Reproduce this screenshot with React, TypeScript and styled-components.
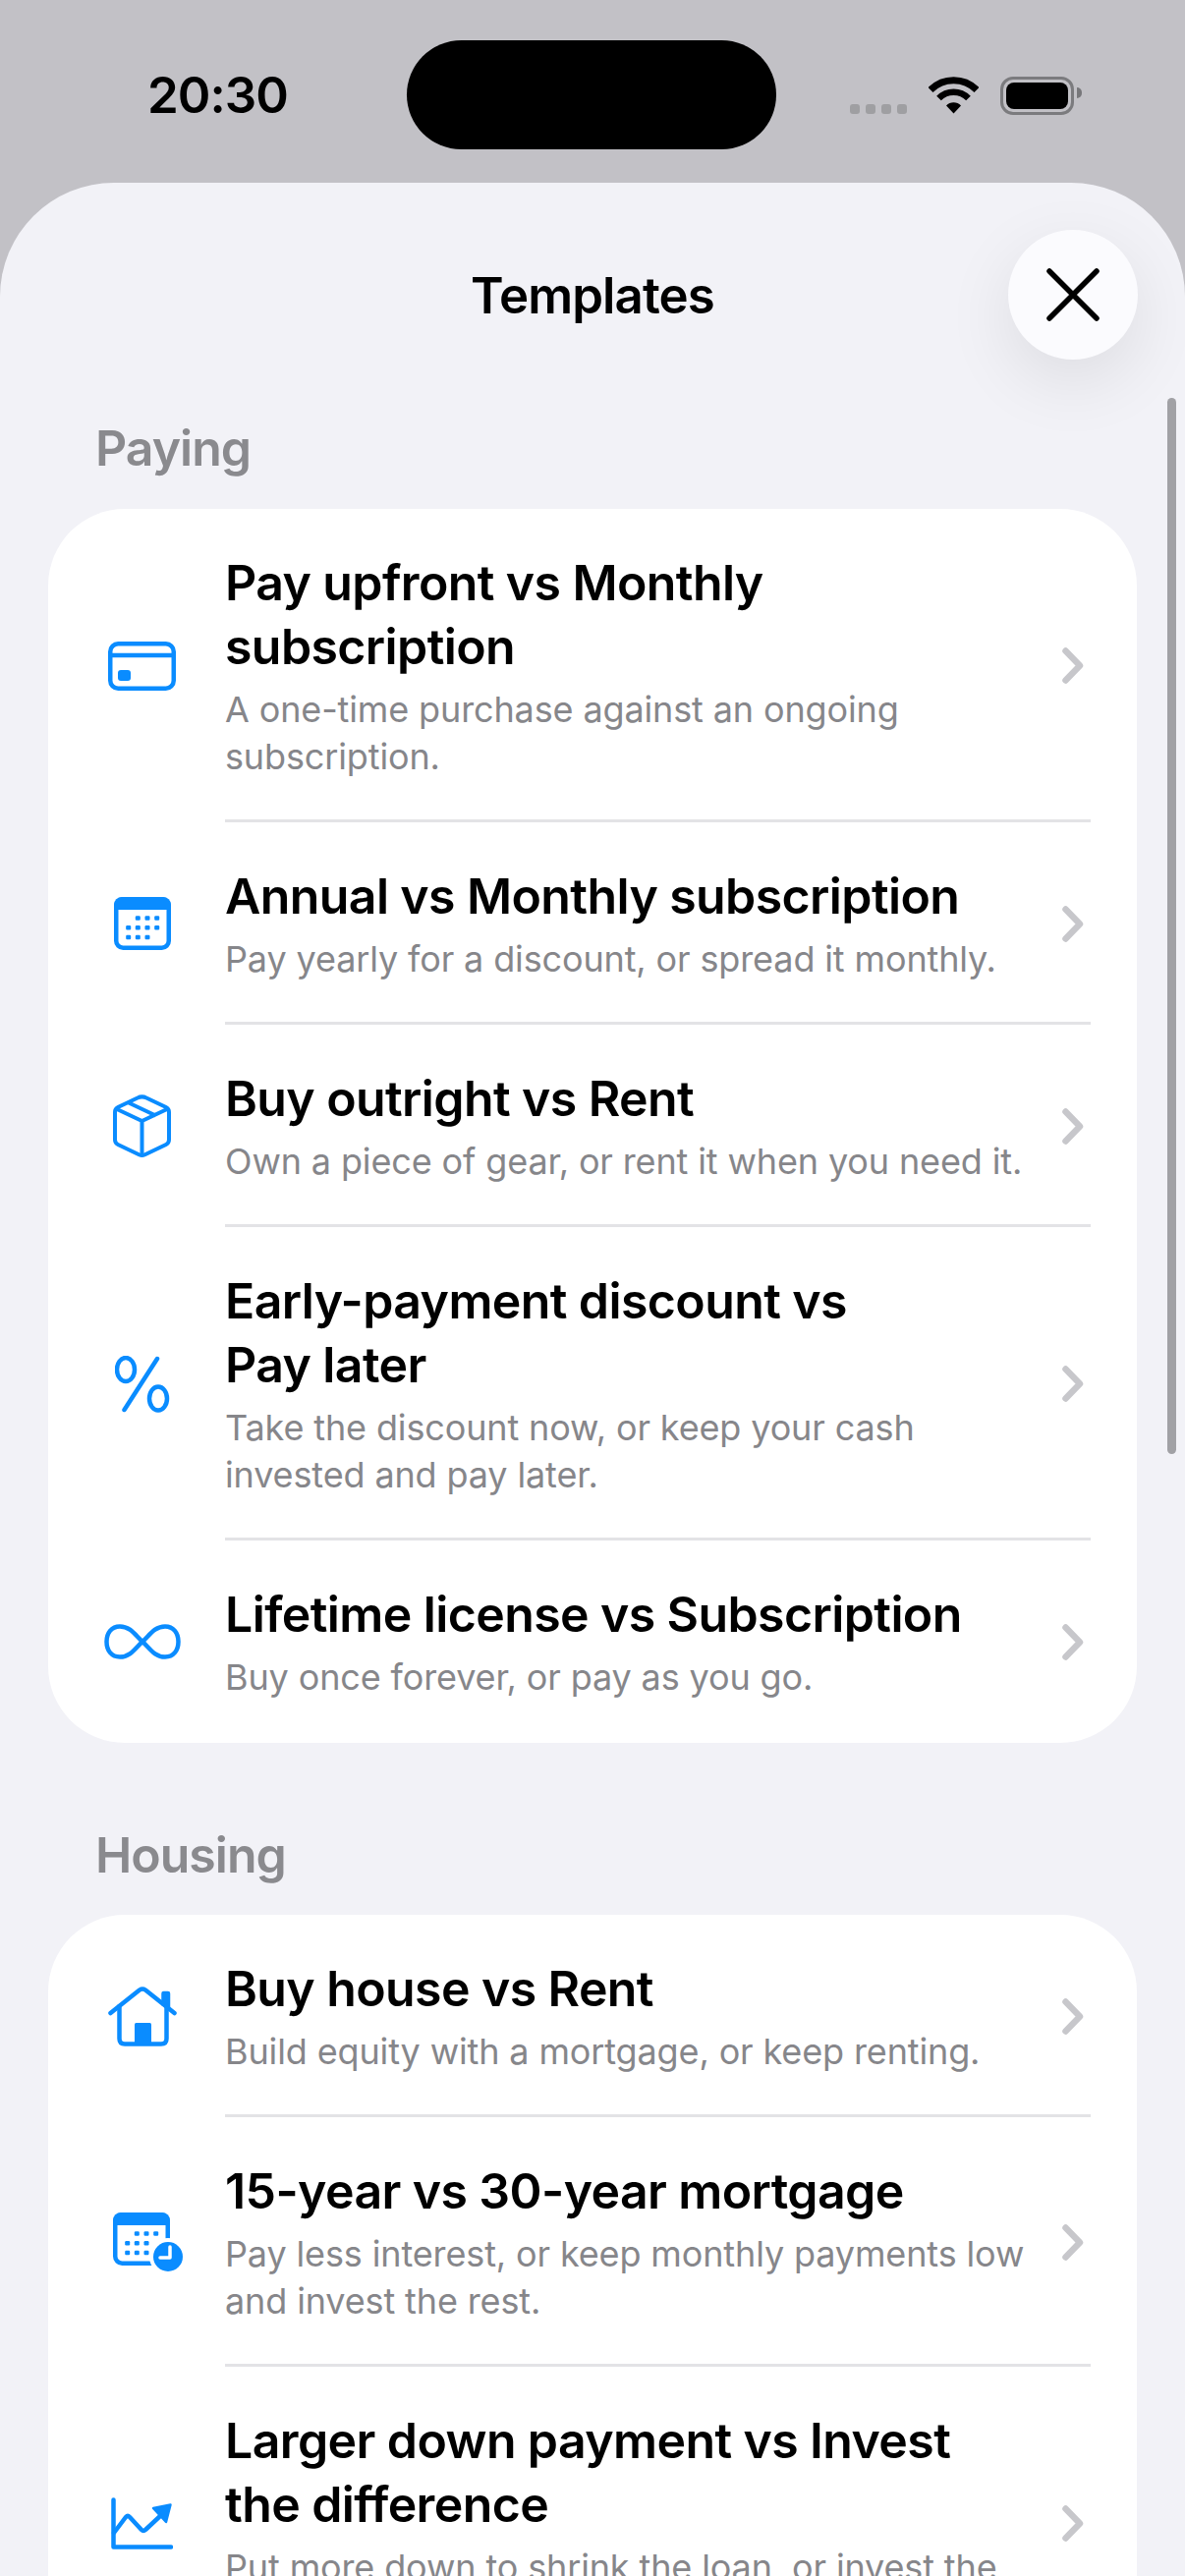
import React from "react";
import styled, {createGlobalStyle} from "styled-components";

type Template = {
    icon: React.ReactNode,
    title: string,
    text: string
}

type Section = {
    name: string,
    rows: Template[]
}

const BLUE = '#0a8cff'

const GlobalStyle = createGlobalStyle`
  html, body {
    margin: 0;
    height: 2622px;
    overflow: hidden;
    background: #c2c1c6;
  }
  body {
    font-family: Inter, "Liberation Sans", sans-serif;
    -webkit-font-smoothing: antialiased;
  }
`

const Screen = styled.div`
  width: 1206px;
  height: 2622px;
  overflow: hidden;
  background: #c2c1c6;
`

const StatusBar = styled.div`
  display: grid;
  grid-template-columns: 414px 376px 1fr;
  height: 186px;
`

const Time = styled.div`
  padding: 65px 0 0 150px;
  font-size: 51px;
  line-height: 64px;
  font-weight: 600;
  letter-spacing: -1px;
  color: #000;
`

const Island = styled.div`
  height: 111px;
  margin-top: 41px;
  border-radius: 56px;
  background: #000;
`

const StatusIcons = styled.div`
  display: flex;
  align-items: flex-start;
  padding: 78px 0 0 75px;
`

const Dots = styled.div`
  display: flex;
  gap: 6px;
  margin: 28px 22px 0 0;
`

const Dot = styled.span`
  width: 10px;
  height: 10px;
  border-radius: 3px;
  background: #9f9fa2;
`

const Wifi = styled.svg`
  width: 51px;
  height: 38px;
  margin-right: 22px;
`

const Battery = styled.div`
  position: relative;
  box-sizing: border-box;
  width: 75px;
  height: 39px;
  padding: 3px;
  border: 3px solid #7b7b7e;
  border-radius: 13px;
  &::before {
    content: '';
    display: block;
    height: 100%;
    border-radius: 8px;
    background: #000;
  }
  &::after {
    content: '';
    position: absolute;
    top: 8px;
    right: -11px;
    width: 5px;
    height: 11px;
    border-radius: 0 6px 6px 0;
    background: #77777a;
  }
`

const Sheet = styled.div`
  position: relative;
  height: 2436px;
  overflow: hidden;
  border-radius: 116px 116px 0 0;
  background: #f2f2f7;
`

const Header = styled.div`
  display: grid;
  grid-template-columns: 1fr auto 1fr;
  align-items: center;
  padding: 48px 48px 0;
`

const Title = styled.div`
  font-size: 51px;
  font-weight: 600;
  letter-spacing: -0.9px;
  color: #000;
`

const CloseButton = styled.div`
  justify-self: end;
  display: flex;
  align-items: center;
  justify-content: center;
  width: 132px;
  height: 132px;
  border-radius: 50%;
  background: #fbfbfe;
  box-shadow: 0 22px 70px rgba(0, 0, 0, 0.09);
`

const ScrollThumb = styled.div`
  position: absolute;
  top: 219px;
  right: 9px;
  width: 9px;
  height: 1075px;
  border-radius: 5px;
  background: #a1a1a5;
`

const SectionBlock = styled.div`
  padding: 0 49px;
`

const SectionName = styled.div<{$first: boolean}>`
  padding: ${props => props.$first ? '60px 0 32px' : '84px 0 31px'} 48px;
  font-size: 50px;
  line-height: 60px;
  font-weight: 600;
  letter-spacing: -1px;
  color: #8a8a8e;
`

const Card = styled.div`
  border-radius: 78px;
  background: #fff;
  overflow: hidden;
`

const Row = styled.div`
  display: flex;
  align-items: stretch;
`

const IconSlot = styled.div`
  flex: none;
  display: flex;
  align-items: center;
  justify-content: center;
  width: 169px;
  margin-left: 11px;
`

const RowBody = styled.div<{$last: boolean}>`
  flex: 1;
  display: flex;
  align-items: center;
  justify-content: space-between;
  margin-right: 47px;
  padding: 43px 0 40px;
  border-bottom: 3px solid ${props => props.$last ? 'transparent' : '#e3e3e6'};
`

const RowText = styled.div`
  width: 816px;
`

const RowTitle = styled.div`
  margin-bottom: 7px;
  font-size: 50px;
  line-height: 65px;
  font-weight: 600;
  letter-spacing: -0.6px;
  color: #000;
`

const RowSub = styled.div`
  font-size: 36px;
  line-height: 48px;
  letter-spacing: -0.13px;
  color: #86868a;
`

const Chevron = styled.svg`
  flex: none;
  width: 22px;
  height: 37px;
  margin-right: 7px;
`

const ClockCalendarSvg = styled.svg`
  margin-left: 12px;
`

function CardIcon(){
    return(
        <svg width="69" height="50" viewBox="0 0 69 50" fill="none" stroke={BLUE} strokeWidth="4.5">
            <rect x="2.25" y="2.25" width="64.5" height="45.5" rx="8"/>
            <path d="M2 14h65"/>
            <rect x="10" y="29" width="13" height="11" rx="3" fill={BLUE} stroke="none"/>
        </svg>
    )
}

function CalendarDots({rows}: {rows: number[][]}){
    const xs = [14.7, 24.3, 34, 43.7]
    const ys = [21.5, 31.3, 41]
    return(
        <>
            {rows.map((cols, r) => cols.map(c => (
                <rect key={r + '-' + c} x={xs[c] - 2.5} y={ys[r] - 2.2} width="5" height="4.4" rx="1.2" fill={BLUE}/>
            )))}
        </>
    )
}

function CalendarIcon(){
    return(
        <svg width="58" height="54" viewBox="0 0 58 54" fill="none">
            <rect x="2.25" y="2.25" width="53.5" height="49.5" rx="7" stroke={BLUE} strokeWidth="4.5"/>
            <path d="M0 13V8a8 8 0 0 1 8-8h42a8 8 0 0 1 8 8v5z" fill={BLUE}/>
            <CalendarDots rows={[[1, 2, 3], [0, 1, 2, 3], [0, 1, 2]]}/>
        </svg>
    )
}

function BoxIcon(){
    return(
        <svg width="59" height="64" viewBox="0 0 59 64" fill="none" stroke={BLUE} strokeWidth="4" strokeLinejoin="round">
            <path d="M25 3.5a10 10 0 0 1 9 0L54 13q3 1.5 3 5V46q0 3.5-3 5L32 61.5q-2.5 1-5 0L5 51q-3-1.5-3-5V18q0-3.5 3-5z"/>
            <path d="M3 14.5 29.5 27 56 14.5M29.5 27V62M16 8.5 43.5 21.5"/>
        </svg>
    )
}

function PercentIcon(){
    return(
        <svg width="56" height="58" viewBox="0 0 56 58" fill="none" stroke={BLUE} strokeWidth="4.5">
            <ellipse cx="11" cy="14" rx="9" ry="12"/>
            <ellipse cx="44" cy="43.5" rx="9" ry="12"/>
            <path d="M43 3 9.5 55" strokeLinecap="round"/>
        </svg>
    )
}

function InfinityIcon(){
    return(
        <svg width="78" height="36" viewBox="0 0 78 36" fill="none" stroke={BLUE} strokeWidth="4.5">
            <path d="M39 18C32 12 27 2.5 16 2.5 7.5 2.5 2.5 9 2.5 18S7.5 33.5 16 33.5C27 33.5 32 24 39 18S51 2.5 62 2.5C70.5 2.5 75.5 9 75.5 18S70.5 33.5 62 33.5C51 33.5 46 24 39 18Z"/>
        </svg>
    )
}

function HouseIcon(){
    return(
        <svg width="70" height="62" viewBox="0 0 70 62" fill="none" stroke={BLUE} strokeWidth="4.5" strokeLinecap="round" strokeLinejoin="round">
            <path d="M2.5 28 32 4.5q3-2 6 0L67.5 28"/>
            <path d="M56.5 19V8H61V23"/>
            <path d="M11.5 21V54q0 5.5 5.5 5.5H54q5.5 0 5.5-5.5V21"/>
            <rect x="27" y="38" width="17" height="22" rx="1.5" fill={BLUE} stroke="none"/>
        </svg>
    )
}

function CalendarClockIcon(){
    return(
        <ClockCalendarSvg width="71" height="60" viewBox="0 0 71 60" fill="none">
            <rect x="2.25" y="2.25" width="53.5" height="49.5" rx="7" stroke={BLUE} strokeWidth="4.5"/>
            <path d="M0 13V8a8 8 0 0 1 8-8h42a8 8 0 0 1 8 8v5z" fill={BLUE}/>
            <CalendarDots rows={[[1, 2, 3], [0, 1, 2], [0, 1, 2]]}/>
            <circle cx="56" cy="45" r="19" fill="#fff"/>
            <circle cx="56" cy="45" r="15" fill={BLUE}/>
            <path d="M58 35V46H48" stroke="#fff" strokeWidth="3.5" strokeLinecap="round" strokeLinejoin="round"/>
        </ClockCalendarSvg>
    )
}

function ChartIcon(){
    return(
        <svg width="63" height="53" viewBox="0 0 63 53" fill="none" stroke={BLUE} strokeWidth="4.5" strokeLinecap="round" strokeLinejoin="round">
            <path d="M2.5 2.5V50.5H61"/>
            <path d="M3 36 15 20q2-2 4 0L31 33q2 2 4 0L50 19"/>
            <path d="M60.5 7.5 43 11 56 25z" fill={BLUE} strokeWidth="2.5"/>
        </svg>
    )
}

const sections: Section[] = [
    {
        name: 'Paying',
        rows: [
            {icon: <CardIcon/>, title: 'Pay upfront vs Monthly subscription', text: 'A one-time purchase against an ongoing subscription.'},
            {icon: <CalendarIcon/>, title: 'Annual vs Monthly subscription', text: 'Pay yearly for a discount, or spread it monthly.'},
            {icon: <BoxIcon/>, title: 'Buy outright vs Rent', text: 'Own a piece of gear, or rent it when you need it.'},
            {icon: <PercentIcon/>, title: 'Early-payment discount vs Pay\u00a0later', text: 'Take the discount now, or keep your cash invested and pay later.'},
            {icon: <InfinityIcon/>, title: 'Lifetime license vs Subscription', text: 'Buy once forever, or pay as you go.'},
        ]
    },
    {
        name: 'Housing',
        rows: [
            {icon: <HouseIcon/>, title: 'Buy house vs Rent', text: 'Build equity with a mortgage, or keep renting.'},
            {icon: <CalendarClockIcon/>, title: '15-year vs 30-year mortgage', text: 'Pay less interest, or keep monthly payments low and invest the rest.'},
            {icon: <ChartIcon/>, title: 'Larger down payment vs Invest the difference', text: 'Put more down to shrink the loan, or invest the difference.'},
        ]
    }
]

function App(){
    return(
        <Screen>
            <GlobalStyle/>
            <StatusBar>
                <Time>20:30</Time>
                <Island/>
                <StatusIcons>
                    <Dots>
                        <Dot/><Dot/><Dot/><Dot/>
                    </Dots>
                    <Wifi viewBox="0 0 51 38" fill="none" stroke="#000">
                        <path d="M2 13.5a33 33 0 0 1 47 0" strokeWidth="7"/>
                        <path d="M10.5 22a21 21 0 0 1 30 0" strokeWidth="6.5"/>
                        <path d="M18 29.5a10.5 10.5 0 0 1 15 0L25.5 37.5z" fill="#000" stroke="none"/>
                    </Wifi>
                    <Battery/>
                </StatusIcons>
            </StatusBar>
            <Sheet>
                <ScrollThumb/>
                <Header>
                    <span/>
                    <Title>Templates</Title>
                    <CloseButton>
                        <svg width="54" height="54" viewBox="0 0 54 54" fill="none" stroke="#000" strokeWidth="5.5" strokeLinecap="round">
                            <path d="M3 3 51 51M51 3 3 51"/>
                        </svg>
                    </CloseButton>
                </Header>
                {sections.map((section, s) => (
                    <SectionBlock key={section.name}>
                        <SectionName $first={s === 0}>{section.name}</SectionName>
                        <Card>
                            {section.rows.map((row, index) => (
                                <Row key={row.title}>
                                    <IconSlot>{row.icon}</IconSlot>
                                    <RowBody $last={index === section.rows.length - 1}>
                                        <RowText>
                                            <RowTitle>{row.title}</RowTitle>
                                            <RowSub>{row.text}</RowSub>
                                        </RowText>
                                        <Chevron viewBox="0 0 22 37" fill="none" stroke="#c7c7cb" strokeWidth="6.5" strokeLinecap="round" strokeLinejoin="round">
                                            <path d="M3.5 3.5 18 18.5 3.5 33.5"/>
                                        </Chevron>
                                    </RowBody>
                                </Row>
                            ))}
                        </Card>
                    </SectionBlock>
                ))}
            </Sheet>
        </Screen>
    )
}

export default App
